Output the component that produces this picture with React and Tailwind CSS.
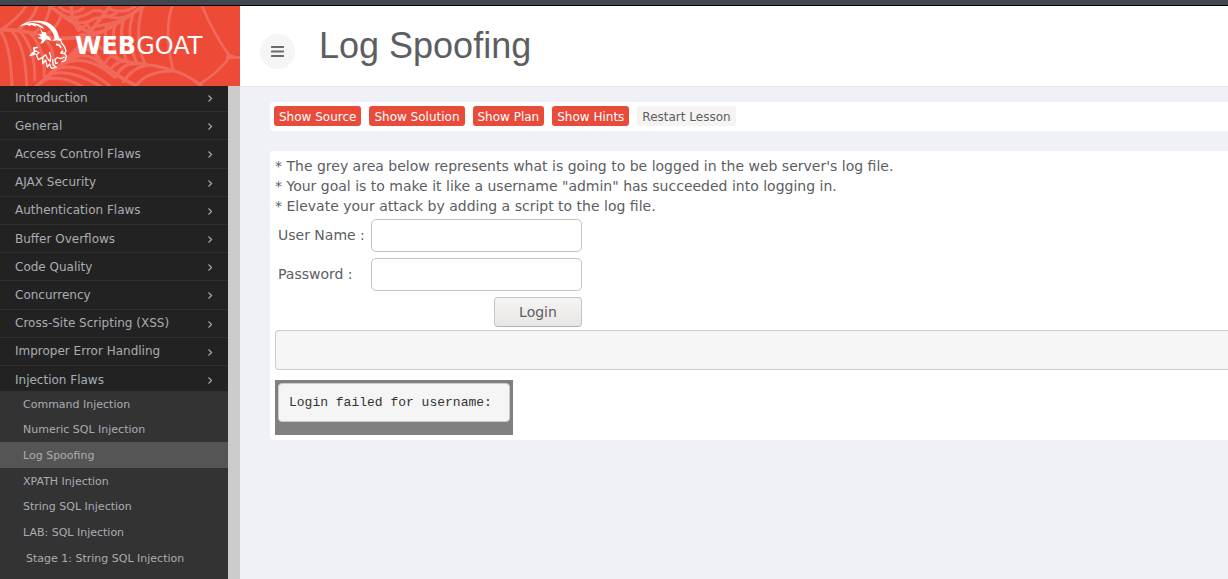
import React from "react";

const categories = [
  "Introduction",
  "General",
  "Access Control Flaws",
  "AJAX Security",
  "Authentication Flaws",
  "Buffer Overflows",
  "Code Quality",
  "Concurrency",
  "Cross-Site Scripting (XSS)",
  "Improper Error Handling",
];

const lessons = [
  { name: "Command Injection" },
  { name: "Numeric SQL Injection" },
  { name: "Log Spoofing", active: true },
  { name: "XPATH Injection" },
  { name: "String SQL Injection" },
  { name: "LAB: SQL Injection" },
  { name: "Stage 1: String SQL Injection", stage: true },
];

const actions = ["Show Source", "Show Solution", "Show Plan", "Show Hints"];

function SpiderWeb() {
  return (
    <svg
      className="absolute inset-0 h-20 w-60"
      viewBox="0 18 720 240"
      fill="none"
      stroke="#f0695b"
      strokeLinecap="round"
      aria-hidden="true"
    >
      {/* strands running outwards from the hub */}
      <g strokeWidth="11">
        <path d="M0 90Q60 88 120 105T250 110" />
        <path d="M150 18Q190 50 262 95" />
        <path d="M275 90Q240 150 110 258" />
        <path d="M270 130Q290 200 410 258" />
        <path strokeWidth="9" d="M280 120Q330 180 410 190T520 212Q565 225 605 258" />
        <path d="M270 110Q330 90 430 18" />
        <path d="M270 95Q300 60 330 18" />
        <path d="M235 90Q210 50 215 18" />
      </g>
      <g strokeWidth="9">
        {/* left rings */}
        <path d="M0 92Q32 130 36 258" />
        <path d="M35 92Q78 140 80 258" />
        <path d="M60 94Q108 150 104 240" />
        <path d="M90 98Q138 150 132 230" />
        <path d="M120 104Q168 140 160 205" />
        <path d="M150 108Q195 135 190 180" />
        <path d="M0 92Q60 50 78 18" />
        <path d="M50 92Q100 60 112 18" />
        <path d="M100 100Q145 70 150 18" />
        <path d="M140 104Q180 75 185 40" />
        {/* lower rings */}
        <path d="M120 250Q160 215 245 258" />
        <path d="M135 232Q190 195 300 258" />
        <path d="M152 218Q220 170 330 258" />
        <path d="M175 200Q250 150 345 232" />
        <path d="M200 185Q260 140 318 206" />
        <path d="M222 165Q265 130 295 172" />
        <path d="M312 196Q330 155 352 178" />
        <path d="M325 215Q360 170 390 190" />
        <path d="M345 232Q370 185 415 192" />
        <path d="M370 245Q400 200 445 196" />
        <path d="M410 256Q435 215 520 212" />
        {/* right rings */}
        <path d="M320 75Q310 110 325 160" />
        <path d="M345 72Q333 115 350 175" />
        <path d="M370 60Q355 115 380 185" />
        <path d="M400 38Q375 110 410 188" />
        <path d="M428 20Q400 110 435 192" />
        {/* upper rings */}
        <path d="M180 22Q215 50 250 25" />
        <path d="M185 45Q230 65 280 32Q300 30 315 38" />
        <path d="M215 65Q255 75 285 55Q310 55 350 40" />
        <path d="M290 78Q320 75 370 60" />
        <path d="M325 25Q365 45 405 20" />
        <path d="M315 45Q350 65 395 42" />
        <path d="M228 50L238 90L262 72L275 100L300 95" />
      </g>
      <path strokeWidth="38" d="M248 118L278 140" />
      <g strokeWidth="8">
        <path d="M516 18Q490 100 520 212" />
        <path d="M606 18Q640 100 690 170L720 173" />
        <path d="M690 170Q660 212 600 252" />
        <path strokeWidth="13" d="M684 170L698 171" />
      </g>
    </svg>
  );
}

function GoatHead() {
  return (
    <svg className="h-[52px] w-[50px] shrink-0" viewBox="26 30 150 156" fill="#fff" aria-hidden="true">
      {/* horn */}
      <path d="M27 50C42 34 70 30 95 33C125 37 143 58 146 84L154 88L150 93L139 91L126 94L133 84C128 63 113 46 92 40C75 35 58 36 48 41C60 38 75 39 88 44L104 56L94 54L76 45L78 50L62 44L60 48L48 44C41 44 34 47 27 50Z" />
      {/* ear and forelock */}
      <path d="M90 55L97 66L107 67L108 76L117 80L125 93L107 88L99 98L90 102L95 89L81 83L92 80L84 72L94 73Z" />
      <g fill="none" stroke="#fff" strokeWidth="4" strokeLinejoin="round">
        {/* brow, nose and mouth */}
        <path d="M150 88L154 99L163 111L167 123L163 130L168 138L165 151L153 156" />
        <path strokeWidth="5" d="M137 103L147 106L152 113" />
        <path d="M164 131L151 129L158 122M163 141L150 146L139 142" />
        {/* beard */}
        <path strokeWidth="5" d="M82 112L70 114L73 124L60 136L76 131" />
        <path d="M71 120L86 128L78 134L84 149L97 142L97 161L106 150L111 171L118 162L123 175L138 172L128 164L127 148" />
        <path d="M97 142L106 134L111 145L120 155L121 138L117 126" />
        <path d="M139 143L134 150L136 161L143 158" />
      </g>
    </svg>
  );
}

function Chevron() {
  return (
    <svg className="mt-0.5 h-[7px] w-[5px]" viewBox="0 0 5 7" fill="none" stroke="currentColor" strokeWidth="1.1" aria-hidden="true">
      <path d="M0.5 0.5L3.6 3.5L0.5 6.5" />
    </svg>
  );
}

function Category({ name }) {
  return (
    <a href="#" className="flex h-full items-center justify-between pr-[15px] pl-[15px]">
      {name}
      <Chevron />
    </a>
  );
}

function Sidebar() {
  return (
    <nav className="flex flex-1 bg-[#ccc]">
      <div className="flex w-57 flex-col overflow-hidden bg-[#333] text-xs text-[#a9adb3]">
        <ul className="-mt-0.5 grid h-[282px] auto-rows-fr bg-[#222]">
          {categories.map((name) => (
            <li key={name} className="border-b border-[#303030]">
              <Category name={name} />
            </li>
          ))}
        </ul>
        <div className="h-[25px] bg-[#222] pt-0.5">
          <Category name="Injection Flaws" />
        </div>
        <ul className="grid h-[180px] auto-rows-fr text-[11px]">
          {lessons.map(({ name, active, stage }) => (
            <li key={name} className={active ? "bg-[#555]" : ""}>
              <a href="#" className={`flex h-full items-center pt-0.5 ${stage ? "pl-[26px]" : "pl-[23px]"}`}>
                {name}
              </a>
            </li>
          ))}
        </ul>
      </div>
    </nav>
  );
}

function LoginForm() {
  const label = "pb-0.5";
  const field = "h-[33px] w-full rounded-[5px] border border-[#c6c4c0] bg-white px-2 outline-none";
  return (
    <form className="grid grid-cols-[93px_211px] items-center gap-y-1.5 px-[3px] pt-[3px]" onSubmit={(e) => e.preventDefault()}>
      <label htmlFor="username" className={label}>User Name :</label>
      <input id="username" type="text" className={field} />
      <label htmlFor="password" className={label}>Password :</label>
      <input id="password" type="password" className={field} />
      <button
        type="submit"
        className="col-start-2 h-[30px] w-22 justify-self-end rounded-[4px] border border-[#c9c5c2] border-b-[#b5b1ae] bg-linear-to-b from-[#f6f5f4] to-[#e9e7e5]"
      >
        Login
      </button>
    </form>
  );
}

export default function App() {
  return (
    <div className="flex min-h-screen flex-col bg-[#f0f1f7] font-['DejaVu_Sans',sans-serif] text-sm text-[#5b5e62]">
      <div className="h-1.5 border-b border-black bg-[#42464e]" />
      <div className="flex flex-1">
        <aside className="flex w-60 shrink-0 flex-col">
          <a href="#" className="relative flex h-20 items-center overflow-hidden bg-[#ed4b37] pl-[19px]">
            <SpiderWeb />
            <span className="relative flex items-center gap-1.5">
              <GoatHead />
              <span className="text-2xl text-white">
                <b>WEB</b>GOAT
              </span>
            </span>
          </a>
          <Sidebar />
        </aside>
        <div className="min-w-0 flex-1">
          <header className="flex h-[81px] items-center gap-6 border-b border-[#e4e5e9] bg-white pl-5">
            <button aria-label="Toggle menu" className="mt-2.5 flex size-[35px] items-center justify-center rounded-full bg-[#f5f5f5]">
              <svg className="h-[11px] w-[13px]" viewBox="0 0 13 11" fill="#6b6b6b" aria-hidden="true">
                <rect width="13" height="2" rx="0.5" />
                <rect y="4.5" width="13" height="2" rx="0.5" />
                <rect y="9" width="13" height="2" rx="0.5" />
              </svg>
            </button>
            <h1 className="font-['Liberation_Sans',sans-serif] text-4xl">Log Spoofing</h1>
          </header>
          <main className="flex flex-col gap-5 pt-[15px] pl-[30px]">
            <div className="flex gap-2 rounded-l-[4px] bg-white px-1 pt-1 pb-[5px] text-xs">
              {actions.map((name) => (
                <button key={name} className="h-5 rounded-[3px] bg-[#e94b3b] px-[5px] pt-0.5 text-white">
                  {name}
                </button>
              ))}
              <button className="h-5 rounded-[3px] bg-[#f5f4f3] px-[5px] pt-0.5">Restart Lesson</button>
            </div>
            <section className="rounded-l-[4px] bg-white pt-[5px] pb-[5px] pl-[5px]">
              <div className="leading-5">
                <p>* The grey area below represents what is going to be logged in the web server's log file.</p>
                <p>* Your goal is to make it like a username "admin" has succeeded into logging in.</p>
                <p>* Elevate your attack by adding a script to the log file.</p>
              </div>
              <LoginForm />
              <div className="mt-[3px] h-10 rounded-l-[4px] border border-r-0 border-[#ccc] bg-[#f5f5f5]" />
              <div className="mt-2.5 h-[55px] w-fit bg-[#808080] p-[3px]">
                <pre className="rounded-[4px] border border-[#ccc] bg-[#f5f5f5] py-[9px] pr-[17px] pl-2.5 font-['Liberation_Mono',monospace] text-[13px] leading-[19px] text-[#333]">
                  Login failed for username:
                </pre>
              </div>
            </section>
          </main>
        </div>
      </div>
    </div>
  );
}
